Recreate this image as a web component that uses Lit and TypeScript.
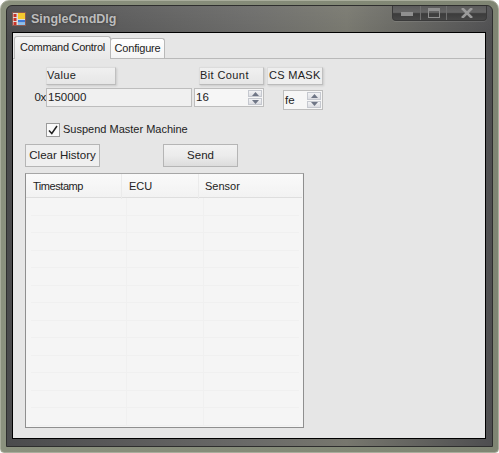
import { LitElement, html, css } from "lit";
import { customElement } from "lit/decorators.js";

@customElement("app-root")
export class AppRoot extends LitElement {
  static styles = css`
    :host { display: block; width: 499px; height: 453px; background: #fff; font-family: "Liberation Sans", Arial, sans-serif; font-size: 11px; color: #222; overflow: hidden; }
    * { box-sizing: border-box; }
    .window { width: 499px; height: 453px; border-radius: 9px 9px 4px 4px; border: 1px solid #a9ad9c; background: linear-gradient(90deg,#8b917e,#7f8573); padding: 4px 5px 5px 5px; }
    .frame { height: 100%; border-radius: 6px 6px 0 0; border: 1px solid #2e2e2e; background: linear-gradient(180deg,rgba(255,255,255,.06),rgba(0,0,0,0) 30px), linear-gradient(90deg,#4b4b4d 0%,#6a6a68 50%,#77776e 70%,#4e4e50 100%); padding: 0 6px 7px 5px; display: flex; flex-direction: column; }
    .title { height: 26px; flex: none; display: flex; align-items: flex-start; position: relative; }
    .app-icon { margin: 6px 0 0 0; }
    .title-text { margin: 6px 0 0 5px; font-weight: bold; font-size: 12.5px; line-height: 15px; color: #bdbdbd; text-shadow: 0 0 3px #333; }
    .caption { margin-left: auto; margin-right: -1px; display: flex; height: 15px; border: 1px solid #3a3a3a; border-top: none; border-radius: 0 0 4px 4px; background: linear-gradient(180deg,#5c5c5c,#666 45%,#3c3c3c 55%,#474747); box-shadow: 0 1px 0 rgba(255,255,255,.1); }
    .caption div { display: flex; align-items: center; justify-content: center; border-left: 1px solid #707070; height: 100%; }
    .caption div:first-child { border-left: none; }
    .cmin { width: 27px; } .cmax { width: 26px; } .cclose { width: 40px; }
    .client { flex: 1; border: 1px solid #000; background: #e6e6e6; position: relative; display: flex; flex-direction: column; padding-top: 2px; }
    .tabs { height: 24px; flex: none; display: flex; align-items: flex-end; padding-left: 1px; border-bottom: 1px solid #b9b9b9; }
    .tab { border: 1px solid #b9b9b9; border-bottom: none; border-radius: 3px 3px 0 0; background: #fff; display: flex; align-items: center; justify-content: center; white-space: nowrap; letter-spacing: -.2px; }
    .tab.active { width: 97px; height: 23px; background: linear-gradient(180deg,#f5f5f5,#e8e8e8); margin-bottom: -1px; z-index: 1; padding-bottom: 3px; letter-spacing: -.3px; }
    .tab.other { width: 55px; height: 20px; margin-left: -1px; padding-bottom: 2px; background: linear-gradient(180deg,#fff,#f4f4f4); }
    .panel { flex: 1; display: flex; flex-direction: column; padding: 8px 0 0 13px; }
    .row { display: flex; flex: none; }
    .hdr { height: 18px; border: 1px solid #dcdcdc; border-right-color: #c0c0c0; border-bottom-color: #bbb; background: linear-gradient(180deg,#f0f0f0,#e6e6e6); box-shadow: 1px 1px 2px rgba(0,0,0,.12); display: flex; align-items: center; padding-bottom: 2px; letter-spacing: .4px; white-space: nowrap; }
    .h-value { width: 70px; margin-left: 20px; }
    .h-bits { width: 65px; margin-left: 83px; }
    .h-cs { width: 56px; margin-left: 3px; padding-left: 1px; background: #eee; letter-spacing: .3px; }
    .inputs { margin-top: 3px; height: 22px; align-items: flex-start; font-size: 11.5px; }
    .ox { width: 20px; height: 19px; line-height: 19px; text-align: right; letter-spacing: -.3px; }
    .tb { height: 19px; border: 1px solid #bdbdbd; line-height: 17px; padding-left: 1px; }
    .tb-val { width: 146px; background: #f0f0f0; }
    .spin { position: relative; display: flex; align-items: center; background: #f6f6f6; }
    .spin-16 { width: 70px; margin-left: 2px; padding-left: 1px; height: 19px; }
    .spin-fe { width: 40px; height: 20px; margin: 2px 0 0 19px; padding-left: 1px; }
    .spin-btns { position: absolute; right: 1px; top: 1px; bottom: 1px; width: 14px; display: flex; flex-direction: column; gap: 1px; }
    .spin-btns span { flex: 1; border: 1px solid #c5c8cf; background: linear-gradient(180deg,#f2f3f5,#dcdde2); display: flex; align-items: center; justify-content: center; }
    .check-row { margin: 12px 0 0 20px; height: 16px; align-items: center; gap: 3px; font-size: 11px; }
    .check-row span { margin-top: -2px; }
    .check { width: 14px; height: 14px; border: 1px solid #9b9b9b; background: #fafafa; display: flex; align-items: center; justify-content: center; }
    .btn-row { margin: 6px 0 0 -1px; height: 24px; font-size: 11.5px; }
    .btn { height: 23px; border: 1px solid #b5b5b5; display: flex; align-items: center; justify-content: center; padding-bottom: 1px; }
    .btn-clear { width: 75px; background: #efefef; }
    .btn-send { width: 75px; margin-left: 63px; background: linear-gradient(180deg,#f2f2f2 0%,#ececec 50%,#dcdcdc 100%); }
    .list { width: 279px; height: 255px; margin: 5px 0 0 -1px; border: 1px solid #8f8f8f; border-top-color: #a6a6a6; background: #f5f5f5; flex: none; overflow: hidden; }
    .lhead { height: 24px; display: grid; grid-template-columns: 96px 77px 1fr; background: linear-gradient(180deg,#fafafa,#f2f2f2); border-bottom: 1px solid #dedede; margin-right: 1px; }
    .lhead div { padding-left: 7px; line-height: 25px; border-right: 1px solid #ebebeb; }
    .lhead div:first-child { letter-spacing: -.45px; }
    .lhead div:last-child { border-right: none; padding-left: 6px; }
    .lrow { height: 17.5px; display: grid; grid-template-columns: 96px 77px 1fr; border-bottom: 1px solid #f0f0f0; margin: 0 4px 0 5px; }
    .lrow div { border-right: 1px solid #f0f0f0; }
    .lrow div:first-child { margin-left: -5px; }
    .lrow div:last-child { border-right: none; }
  `;

  private arrow(up: boolean) {
    return html`<svg width="7" height="4" viewBox="0 0 7 4"><path d=${up ? "M3.5 0 7 4H0Z" : "M0 0H7L3.5 4Z"} fill="#6f7686"/></svg>`;
  }

  private spinner() {
    return html`<div class="spin-btns"><span>${this.arrow(true)}</span><span>${this.arrow(false)}</span></div>`;
  }

  render() {
    const rows = Array.from({ length: 13 });
    return html`
      <div class="window"><div class="frame">
        <div class="title">
          <svg class="app-icon" width="14" height="14" viewBox="0 0 14 14">
            <rect x=".5" y=".5" width="13" height="13" fill="#ddd" stroke="#8a5a50"/>
            <rect x="6" y="1" width="7" height="6" fill="#f3c92e"/>
            <rect x="6" y="8" width="7" height="2.5" fill="#3f79d6"/>
            <rect x="6" y="10.5" width="7" height="2.5" fill="#8fc0e8"/>
            <rect x="1.5" y="2" width="3" height="3" fill="#c9342a"/>
            <rect x="1.5" y="6" width="3" height="3" fill="#c9342a"/>
            <rect x="1.5" y="10" width="3" height="3" fill="#c9342a"/>
          </svg>
          <span class="title-text">SingleCmdDlg</span>
          <div class="caption">
            <div class="cmin"><svg width="12" height="5"><rect width="12" height="4" y="1" fill="#8f8f8f"/></svg></div>
            <div class="cmax"><svg width="12" height="10"><rect x=".5" y=".5" width="11" height="9" fill="none" stroke="#8f8f8f"/><rect x="1" y="1" width="10" height="2" fill="#8f8f8f"/></svg></div>
            <div class="cclose"><svg width="12" height="10"><path d="M1 0 11 10M11 0 1 10" stroke="#9a9a9a" stroke-width="2.6"/></svg></div>
          </div>
        </div>
        <div class="client">
          <div class="tabs">
            <div class="tab active">Command Control</div>
            <div class="tab other">Configure</div>
          </div>
          <div class="panel">
            <div class="row">
              <div class="hdr h-value">Value</div>
              <div class="hdr h-bits">Bit Count</div>
              <div class="hdr h-cs">CS MASK</div>
            </div>
            <div class="row inputs">
              <div class="ox">0x</div>
              <div class="tb tb-val">150000</div>
              <div class="tb spin spin-16">16${this.spinner()}</div>
              <div class="tb spin spin-fe">fe${this.spinner()}</div>
            </div>
            <div class="row check-row">
              <div class="check"><svg width="10" height="10" viewBox="0 0 10 10"><path d="M1 5.5 3.8 8.5 9 1" fill="none" stroke="#222" stroke-width="1.5"/></svg></div>
              <span>Suspend Master Machine</span>
            </div>
            <div class="row btn-row">
              <div class="btn btn-clear">Clear History</div>
              <div class="btn btn-send">Send</div>
            </div>
            <div class="list">
              <div class="lhead"><div>Timestamp</div><div>ECU</div><div>Sensor</div></div>
              ${rows.map(() => html`<div class="lrow"><div></div><div></div><div></div></div>`)}
            </div>
          </div>
        </div>
      </div></div>
    `;
  }
}
